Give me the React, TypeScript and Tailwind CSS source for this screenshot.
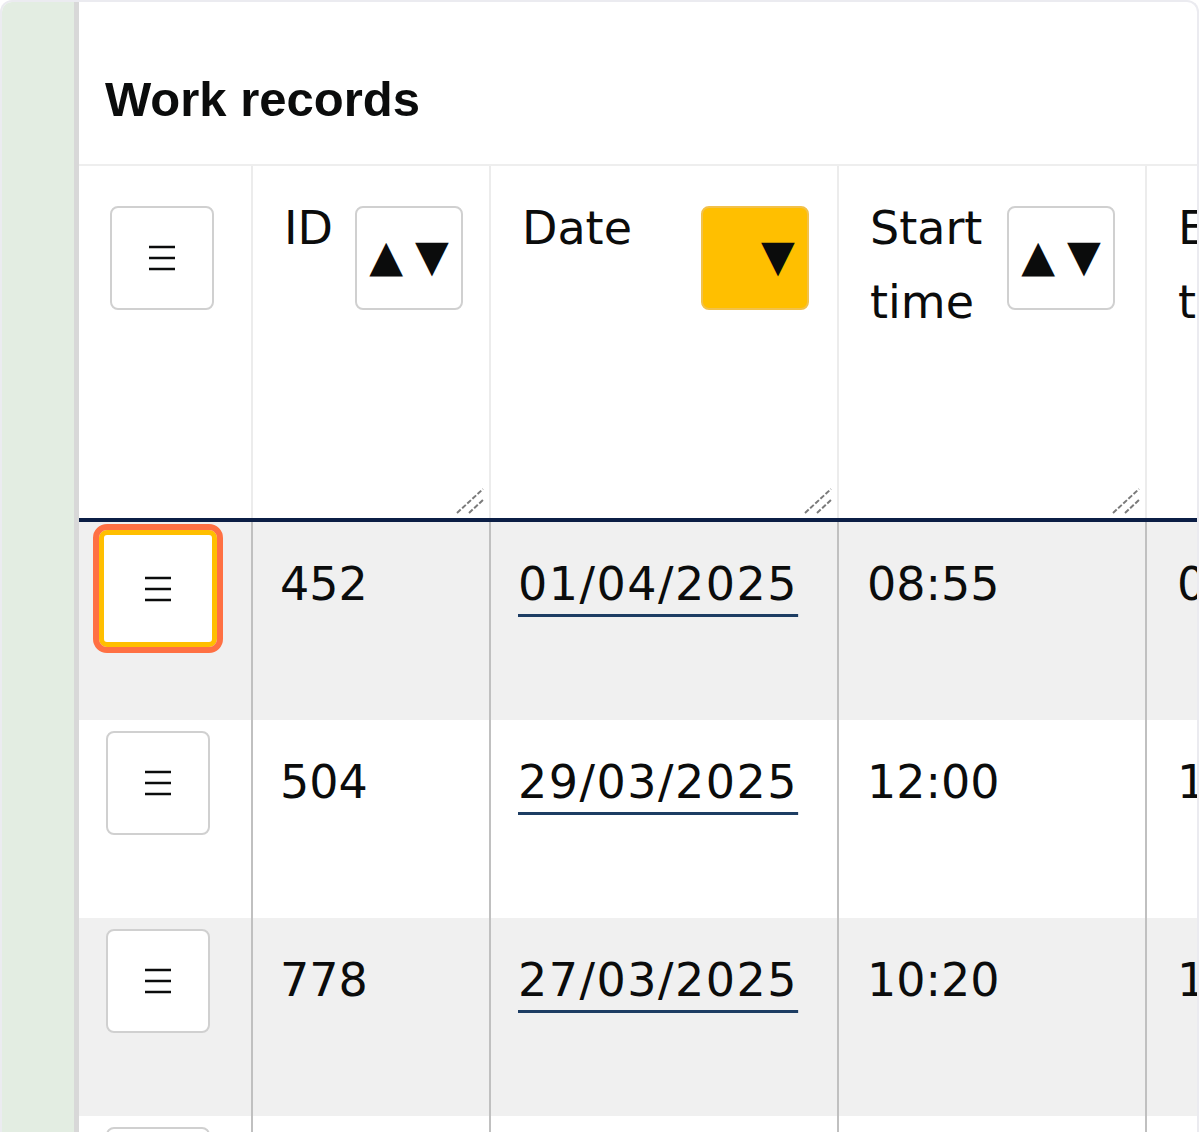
import React from "react";

const body = { fontFamily: '"DejaVu Sans", sans-serif' };

const Handle = () => (
  <svg className="absolute right-[5px] bottom-[4px]" width="28" height="26" viewBox="0 0 28 26">
    <line x1="1" y1="25" x2="27" y2="1" stroke="#7a7a7a" strokeWidth="2" strokeDasharray="5 2" />
    <line x1="13" y1="25" x2="27" y2="12" stroke="#7a7a7a" strokeWidth="2" strokeDasharray="5 2" />
  </svg>
);

const MenuIcon = () => (
  <svg width="26" height="26" viewBox="0 0 26 26">
    <line x1="0" y1="2" x2="26" y2="2" stroke="#0b0c0c" strokeWidth="2.5" />
    <line x1="0" y1="13" x2="26" y2="13" stroke="#0b0c0c" strokeWidth="2.5" />
    <line x1="0" y1="24" x2="26" y2="24" stroke="#0b0c0c" strokeWidth="2.5" />
  </svg>
);

const MenuButton = () => (
  <div className="w-[104px] h-[104px] rounded-[8px] border-2 border-[#d0d0d0] bg-white flex items-center justify-center">
    <MenuIcon />
  </div>
);

const SortButton = ({ active }: { active?: boolean }) => (
  <div
    className={
      "shrink-0 w-[108px] h-[104px] mt-[15px] rounded-[8px] border-2 flex items-center justify-center gap-[12px] text-[44px] leading-none text-[#0b0c0c] " +
      (active ? "bg-[#ffbf00] border-[#f2c14a]" : "bg-white border-[#d0d0d0]")
    }
  >
    <span className={"-mt-[4px] " + (active ? "text-transparent" : "")}>▲</span>
    <span className="-mt-[4px]">▼</span>
  </div>
);

const HeaderCell = ({
  label,
  pl,
  pr,
  active,
  last,
}: {
  label: string;
  pl: string;
  pr: string;
  active?: boolean;
  last?: boolean;
}) => (
  <div className={"relative flex justify-between items-start gap-[16px] pt-[25px] " + pl + " " + pr + (last ? "" : " border-r-2 border-[#ececec]")}>
    <div className="text-[46px] leading-[74px] text-[#0b0c0c]">{label}</div>
    <SortButton active={active} />
    {!last && <Handle />}
  </div>
);

const rows = [
  { id: "452", date: "01/04/2025", start: "08:55", end: "09:30", focus: true },
  { id: "504", date: "29/03/2025", start: "12:00", end: "14:15" },
  { id: "778", date: "27/03/2025", start: "10:20", end: "11:45" },
  { id: "812", date: "25/03/2025", start: "09:10", end: "10:00" },
];

export default function App() {
  return (
    <div className="w-[1199px] h-[1132px] bg-white">
      <div className="h-full border-2 border-b-0 border-[#ebebf0] rounded-t-[12px] overflow-hidden flex bg-white">
        <div className="w-[77px] shrink-0 bg-[#e3ede2] border-r-[5px] border-[#d8d8d8]" />
        <div className="flex-1 min-w-0 overflow-hidden">
          <div
            className="h-[164px] pl-[26px] pt-[73px] border-b-2 border-[#eeeeee] text-[49px] leading-none font-bold text-[#0b0c0c]"
            style={{ fontFamily: '"Liberation Sans", Arial, sans-serif' }}
          >
            Work records
          </div>
          <div style={body} className="w-[1400px]">
            <div className="grid grid-cols-[174px_238px_348px_308px_332px] h-[356px] border-b-4 border-[#0b1e45]">
              <div className="relative pl-[31px] pt-[40px] border-r-2 border-[#ececec]">
                <MenuButton />
              </div>
              <HeaderCell label="ID" pl="pl-[31px]" pr="pr-[26px]" />
              <HeaderCell label="Date" pl="pl-[31px]" pr="pr-[28px]" active />
              <HeaderCell label="Start time" pl="pl-[31px]" pr="pr-[30px]" />
              <HeaderCell label="End time" pl="pl-[31px]" pr="pr-[30px]" last />
            </div>
            {rows.map((r, i) => (
              <div
                key={r.id}
                className={
                  "grid grid-cols-[174px_238px_348px_308px_332px] h-[198px] text-[46px] leading-[74px] text-[#0b0c0c] " +
                  (i % 2 === 0 ? "bg-[#f0f0f0]" : "bg-white")
                }
              >
                <div className="pl-[27px] pt-[11px] border-r-2 border-[#c0c0c0]">
                  {r.focus ? (
                    <div className="-ml-[7px] -mt-[3px] w-[118px] h-[117px] rounded-[8px] bg-white border-[5px] border-[#ffbf00] outline-[6px] outline-solid outline-[#ff7043] flex items-center justify-center">
                      <MenuIcon />
                    </div>
                  ) : (
                    <MenuButton />
                  )}
                </div>
                <div className="pl-[27px] pt-[25px] border-r-2 border-[#c0c0c0]">{r.id}</div>
                <div className="pl-[27px] pt-[25px] border-r-2 border-[#c0c0c0]">
                  <span className="underline decoration-[3px] decoration-[#1d3d63] underline-offset-[14px] tracking-[1.5px]">
                    {r.date}
                  </span>
                </div>
                <div className="pl-[28px] pt-[25px] border-r-2 border-[#c0c0c0]">{r.start}</div>
                <div className="pl-[30px] pt-[25px]">{r.end}</div>
              </div>
            ))}
          </div>
        </div>
      </div>
    </div>
  );
}
